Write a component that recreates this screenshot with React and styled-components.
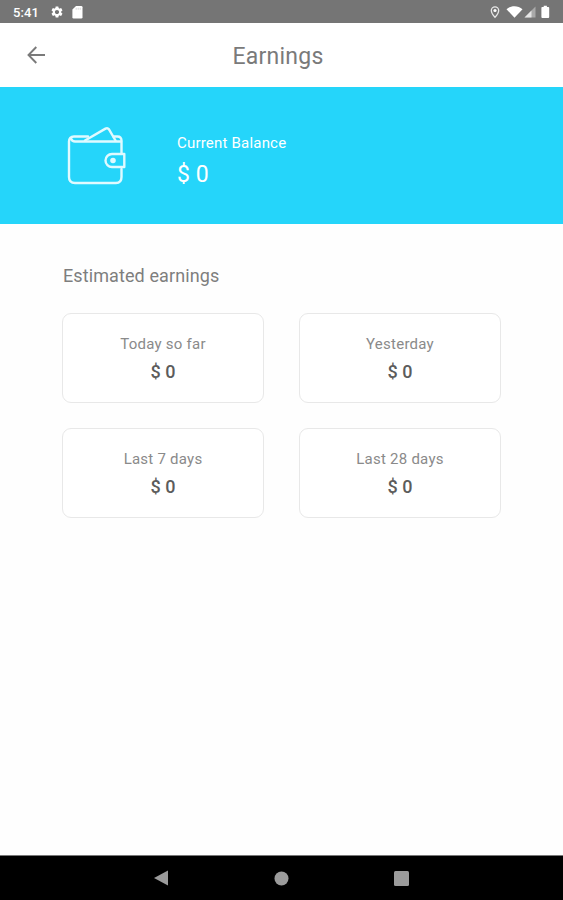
import React from "react";
import styled, { createGlobalStyle } from "styled-components";
import { MdSettings } from "react-icons/md";

const GlobalStyle = createGlobalStyle`
  * { box-sizing: border-box; }
  body { margin: 0; background: #fefefe; font-family: Roboto, sans-serif; }
`;

const Screen = styled.div`
  display: flex;
  flex-direction: column;
  width: 100%;
  height: 100vh;
  overflow: hidden;
  background: #fefefe;
`;

const StatusBar = styled.div`
  display: flex;
  align-items: center;
  flex: none;
  height: 23px;
  padding: 1px 11px 0 13px;
  background: #757575;
  color: #fff;
`;

const Clock = styled.span`
  width: 37px;
  font-size: 13px;
  font-weight: 500;
  line-height: 15px;
  letter-spacing: 0.1px;
`;

const Notifications = styled.div`
  display: flex;
  align-items: center;
  gap: 8px;
  flex: 1;
`;

const StatusIcon = styled.svg`
  display: block;
`;

const Header = styled.header`
  display: grid;
  grid-template-columns: 73px 1fr 80px;
  align-items: center;
  flex: none;
  height: 64px;
  background: #fff;
`;

const BackButton = styled.button`
  display: flex;
  padding: 0 0 0 27px;
  border: 0;
  background: none;
`;

const Title = styled.h1`
  margin: 3px 0 0;
  text-align: center;
  font-size: 23px;
  font-weight: 400;
  line-height: 28px;
  letter-spacing: 0.25px;
  color: #7a7a7a;
`;

const Balance = styled.section`
  display: flex;
  align-items: center;
  flex: none;
  height: 137px;
  padding-left: 66px;
  background: #25d5fa;
  color: #fff;
`;

const BalanceText = styled.div`
  margin: 10px 0 0 50px;
`;

const BalanceLabel = styled.div`
  font-size: 15px;
  line-height: 20px;
  letter-spacing: 0.2px;
`;

const BalanceAmount = styled.div`
  margin-top: 8px;
  font-size: 23px;
  line-height: 28px;
`;

const Content = styled.main`
  flex: 1;
  padding: 40px 62px 0;
`;

const SectionTitle = styled.h2`
  margin: 0 0 26px;
  padding-left: 1px;
  font-size: 18px;
  font-weight: 400;
  line-height: 23px;
  letter-spacing: 0.1px;
  color: #7e7e7e;
`;

const Cards = styled.div`
  display: grid;
  grid-template-columns: 202px 202px;
  column-gap: 35px;
  row-gap: 25px;
`;

const Card = styled.div`
  height: 90px;
  padding-top: 20px;
  border: 1px solid #e8e8e8;
  border-radius: 9px;
  background: #fff;
  text-align: center;
`;

const CardLabel = styled.div`
  font-size: 15px;
  line-height: 20px;
  letter-spacing: 0.24px;
  color: #8a8a8a;
`;

const CardAmount = styled.div`
  margin-top: 7px;
  font-size: 18px;
  font-weight: 500;
  line-height: 22px;
  color: #5c5c5c;
`;

const NavBar = styled.nav`
  display: flex;
  justify-content: center;
  align-items: center;
  gap: 105px;
  flex: none;
  height: 45px;
  padding-right: 2px;
  border-top: 1px solid #777;
  background: #000;
`;

const NavIcon = styled.svg`
  display: block;
  fill: #9b9b9b;
`;

const periods = [
  { label: "Today so far", amount: "$ 0" },
  { label: "Yesterday", amount: "$ 0" },
  { label: "Last 7 days", amount: "$ 0" },
  { label: "Last 28 days", amount: "$ 0" },
];

function SystemIcons() {
  return (
    <StatusIcon width="63" height="16" viewBox="0 0 63 16" fill="#fff">
      <path d="M6 2.800a3.700 3.700 0 0 0-3.700 3.700C2.300 9.300 6 13.400 6 13.400s3.700-4.100 3.700-6.900A3.700 3.700 0 0 0 6 2.800z" fill="none" stroke="#e8e8e8" strokeWidth="1.300" />
      <circle cx="6" cy="6.500" r="1.600" />
      <path d="M17.500 5.200C22 1.300 29 1.300 33.500 5.200L25.500 13.800z" />
      <path d="M46.500 2.500v11h-11z" fillOpacity=".38" />
      <path d="M42.500 6.500v7h-7z" fillOpacity=".7" />
      <path d="M53.200 3h1.500V1.800h3.200V3h1.500q.8 0 .8.800v9.200q0 .9-.9.900h-6q-.9 0-.9-.9V3.800q0-.8.800-.8z" />
    </StatusIcon>
  );
}

function WalletIcon() {
  return (
    <svg width="61" height="62" viewBox="0 0 61 62" fill="none" stroke="#e0faff" strokeWidth="2.400" strokeLinejoin="round" strokeLinecap="round">
      <path d="M22 11.500H8q-5 0-5 5v35.500q0 6 6 6h41q5.500 0 5.500-6v-8M55.500 28V15.500q0-4-4-4h-4" />
      <path d="M5 13.500q1 3 4 3h46" />
      <path d="M19 15.500 39.500 3.600q2-1.200 3.500.7L49.500 15.500" />
      <path d="M58.300 29H46a6.500 6.500 0 0 0 0 13h12.300z" />
      <circle cx="47" cy="35.500" r="1.600" fill="#e0faff" />
    </svg>
  );
}

export default function App() {
  return (
    <Screen>
      <GlobalStyle />
      <StatusBar>
        <Clock>5:41</Clock>
        <Notifications>
          <MdSettings size={14} />
          <StatusIcon width="11" height="13" viewBox="0 0 11 13" fill="#fff">
            <path d="M4 0h5.200q1.300 0 1.300 1.300v9.900q0 1.300-1.300 1.300H1.600Q.4 12.500.4 11.200V3.600z" />
            <path d="M4.200 1.800v2M6.200 1.800v2M8.200 1.800v2" stroke="#c9c9c9" strokeWidth=".7" />
          </StatusIcon>
        </Notifications>
        <SystemIcons />
      </StatusBar>
      <Header>
        <BackButton aria-label="Back">
          <svg width="19" height="18" viewBox="0 0 19 18" fill="none" stroke="#7a7a7a" strokeWidth="1.900">
            <path d="M18 9H2.500M9.300 1 1.500 9l7.800 8" />
          </svg>
        </BackButton>
        <Title>Earnings</Title>
      </Header>
      <Balance>
        <WalletIcon />
        <BalanceText>
          <BalanceLabel>Current Balance</BalanceLabel>
          <BalanceAmount>$ 0</BalanceAmount>
        </BalanceText>
      </Balance>
      <Content>
        <SectionTitle>Estimated earnings</SectionTitle>
        <Cards>
          {periods.map(({ label, amount }) => (
            <Card key={label}>
              <CardLabel>{label}</CardLabel>
              <CardAmount>{amount}</CardAmount>
            </Card>
          ))}
        </Cards>
      </Content>
      <NavBar>
        <NavIcon width="16" height="16" viewBox="0 0 16 16">
          <path d="M15 .5v15L1 8z" />
        </NavIcon>
        <NavIcon width="15" height="15" viewBox="0 0 15 15">
          <circle cx="7.500" cy="7.500" r="7" />
        </NavIcon>
        <NavIcon width="15" height="15" viewBox="0 0 15 15">
          <rect width="15" height="15" rx="1.500" />
        </NavIcon>
      </NavBar>
    </Screen>
  );
}
